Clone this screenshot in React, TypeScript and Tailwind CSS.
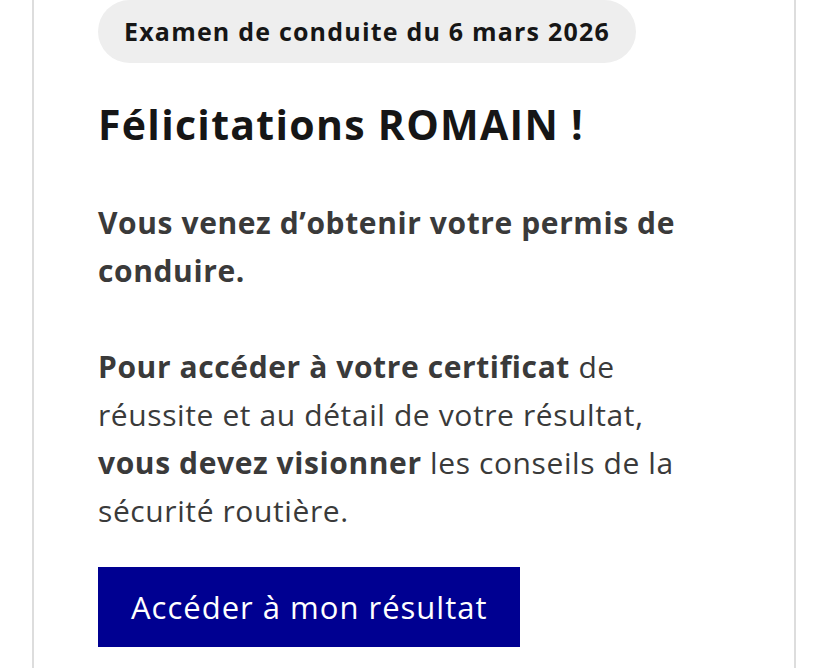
export default function App() {
  return (
    <div className="min-h-[668px] bg-white font-['Open_Sans','Liberation_Sans',sans-serif]">
      <div className="ml-[32px] w-[764px] min-h-[668px] border-x-2 border-[#dddddd] pl-[64px]">
        <div className="w-[610px]">
          <div className="inline-flex h-[63px] items-center rounded-full bg-[#eeeeee] px-[26px] text-[25px] font-bold tracking-[1.2px] text-[#161616]">
            Examen de conduite du 6 mars 2026
          </div>
          <h1 className="mt-[37px] text-[41px] font-bold leading-[48px] tracking-[1.3px] text-[#161616]">
            Félicitations ROMAIN !
          </h1>
          <p className="mt-[51px] text-[30px] font-bold leading-[48px] tracking-[0.6px] text-[#3a3a3a]">
            Vous venez d’obtenir votre permis de conduire.
          </p>
          <p className="mt-[48px] text-[30px] leading-[48px] tracking-[0.6px] text-[#3a3a3a]">
            <span className="font-bold">Pour accéder à votre certificat</span> de
            réussite et au détail de votre résultat,{' '}
            <span className="font-bold">vous devez visionner</span> les conseils
            de la sécurité routière.
          </p>
          <button className="mt-[32px] h-[80px] bg-[#000091] pl-[33px] pr-[32px] text-[31px] tracking-[1px] text-white">
            Accéder à mon résultat
          </button>
        </div>
      </div>
    </div>
  );
}
